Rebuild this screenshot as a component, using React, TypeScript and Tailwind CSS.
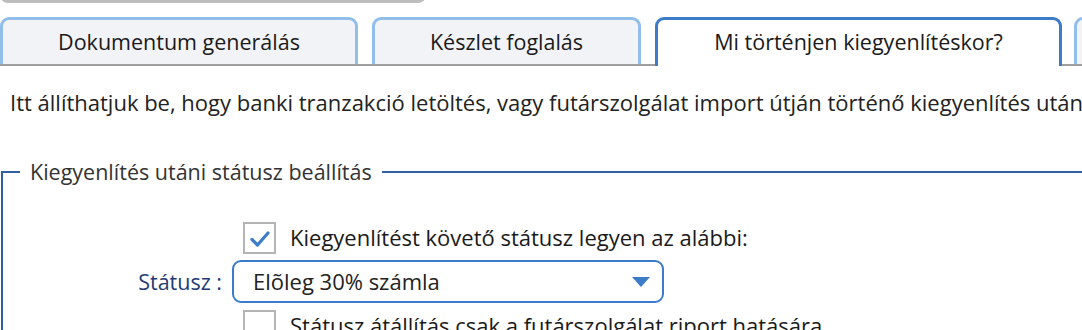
import React from 'react';

const tabs = [
  { label: 'Dokumentum generálás', width: 'w-[358px]', active: false },
  { label: 'Készlet foglalás', width: 'w-[269px]', active: false },
  { label: 'Mi történjen kiegyenlítéskor?', width: 'w-[407px]', active: true },
];

function Checkbox({ checked }: { checked: boolean }) {
  return (
    <span className="flex h-[32px] w-[33px] shrink-0 items-center justify-center border-2 border-[#b4b4b4] bg-white">
      {checked && (
        <svg width="22" height="18" viewBox="0 0 22 18" className="mt-[3px]">
          <path d="M3 9.5 L8.5 15 L19 3" fill="none" stroke="#3d7cc9" strokeWidth="3.2" strokeLinecap="round" strokeLinejoin="round" />
        </svg>
      )}
    </span>
  );
}

export default function App() {
  const [checked, setChecked] = React.useState(true);
  const [onlyCourier, setOnlyCourier] = React.useState(false);

  return (
    <div className="h-[330px] w-[1082px] overflow-hidden bg-white font-['Open_Sans',sans-serif] text-[#1a1a1a]">
      <div className="-mt-[6px] h-[9px] w-[426px] rounded-b-[8px] border-[3px] border-t-0 border-[#bdbdbd]" />

      <div className="mt-[14px] flex items-end gap-[14px] border-b-2 border-[#9e9e9e]">
        {tabs.map((tab) => (
          <div
            key={tab.label}
            className={
              tab.active
                ? `${tab.width} -mb-[2px] flex h-[49px] shrink-0 items-center justify-center rounded-t-[9px] border-[3px] border-b-0 border-[#3b7bc8] bg-white pb-[2px] text-[21.5px]`
                : `${tab.width} flex h-[47px] shrink-0 items-center justify-center rounded-t-[9px] border-[3px] border-b-0 border-[#92bfea] bg-[#f2f3f7] text-[21.5px]`
            }
          >
            {tab.label}
          </div>
        ))}
        <div className="-ml-[2px] h-[47px] w-[40px] shrink-0 rounded-t-[9px] border-[3px] border-b-0 border-[#92bfea] bg-[#f2f3f7]" />
      </div>

      <p className="mt-[20px] whitespace-nowrap pl-[10px] text-[22px] leading-[32px] text-[#222]">
        Itt állíthatjuk be, hogy banki tranzakció letöltés, vagy futárszolgálat import útján történő kiegyenlítés után milyen státuszba kerüljön a dokumentum.
      </p>

      <fieldset className="mt-[38px] ml-[1px] w-[1200px] border-2 border-[#2f5f9f] pb-4">
        <legend className="ml-[17px] px-[10px] text-[21.5px] text-[#333]">Kiegyenlítés utáni státusz beállítás</legend>

        <div className="mt-[33px] grid grid-cols-[219px_auto] items-center gap-x-[10px] gap-y-[6px]">
          <div />
          <label className="ml-[11px] flex cursor-pointer items-center gap-[14px] text-[22px]" onClick={() => setChecked(!checked)}>
            <Checkbox checked={checked} />
            Kiegyenlítést követő státusz legyen az alábbi:
          </label>

          <div className="text-right text-[21.5px] text-[#1f3b73]">Státusz :</div>
          <div className="flex h-[43px] w-[432px] items-center justify-between rounded-[9px] border-2 border-[#3b7bc8] pl-[19px] pr-[12px] text-[22px] text-[#222]">
            <span>Elõleg 30% számla</span>
            <svg width="18" height="10" viewBox="0 0 18 10">
              <path d="M0 0 H18 L9 10 Z" fill="#3b7bc8" />
            </svg>
          </div>

          <div />
          <label className="ml-[11px] flex cursor-pointer items-center gap-[14px] text-[22px]" onClick={() => setOnlyCourier(!onlyCourier)}>
            <Checkbox checked={onlyCourier} />
            Státusz átállítás csak a futárszolgálat riport hatására
          </label>
        </div>
      </fieldset>
    </div>
  );
}
